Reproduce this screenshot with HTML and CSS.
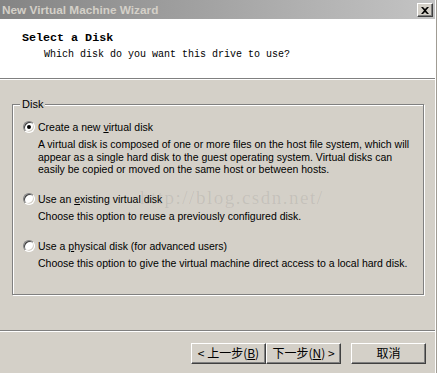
FILE: index.html
```html
<!doctype html>
<html>
<head>
    <meta charset="utf-8">
    <title>New Virtual Machine Wizard</title>
    <link rel="stylesheet" href="styles.css">
</head>
<body>
<div class="window">
    <div class="titlebar">
        <span class="title">New Virtual Machine Wizard</span>
        <a class="close">
            <svg width="8" height="7" viewBox="0 0 8 7"><path d="M0 0h2l2 2 2-2h2L5 3.5 8 7H6L4 5 2 7H0l3-3.5z" fill="#000"/></svg>
        </a>
    </div>

    <div class="header">
        <div class="header-title">Select a Disk</div>
        <div class="header-sub">Which disk do you want this drive to use?</div>
    </div>

    <div class="content">
        <fieldset class="group">
            <legend>Disk</legend>

            <div class="option">
                <div class="radio-row"><span class="radio checked"></span>Create a new <u>v</u>irtual disk</div>
                <div class="desc">
                    A virtual disk is composed of one or more files on the host file system, which will<br>
                    appear as a single hard disk to the guest operating system. Virtual disks can<br>
                    easily be copied or moved on the same host or between hosts.
                </div>
            </div>

            <div class="option">
                <div class="radio-row"><span class="radio"></span>Use an <u>e</u>xisting virtual disk</div>
                <div class="desc">Choose this option to reuse a previously configured disk.</div>
            </div>

            <div class="option">
                <div class="radio-row"><span class="radio"></span>Use a <u>p</u>hysical disk (for advanced users)</div>
                <div class="desc">Choose this option to give the virtual machine direct access to a local hard disk.</div>
            </div>
        </fieldset>
        <div class="watermark">http://blog.csdn.net/</div>
    </div>

    <div class="footer">
        <div class="btn-pair">
            <button class="btn">&lt; 上一步(<u>B</u>)</button>
            <button class="btn">下一步(<u>N</u>) &gt;</button>
        </div>
        <button class="btn">取消</button>
    </div>
</div>
</body>
</html>
```

FILE: styles.css
```css
body {
    margin: 0;
    background: #d4d0c8;
    font-family: "Liberation Sans", Arial, sans-serif;
    font-size: 10.5px;
    color: #000;
}

.window {
    position: relative;
    width: 435px;
    height: 373px;
    border-right: 1px solid #fff;
    box-shadow: 1px 0 0 #a09c94;
}

.titlebar {
    height: 19px;
    display: flex;
    align-items: center;
    justify-content: space-between;
    padding: 0 2px 0 2px;
    background: linear-gradient(to right, #848484, #c4c4c4);
}
.title {
    font-weight: bold;
    font-size: 11.8px;
    color: #d4d0c8;
}
.close {
    display: flex;
    align-items: center;
    justify-content: center;
    width: 14px;
    height: 12px;
    margin-top: 1px;
    background: #d4d0c8;
    border: 1px solid;
    border-color: #fff #404040 #404040 #fff;
    box-shadow: inset -1px -1px 0 #808080;
}

.header {
    height: 60px;
    box-sizing: border-box;
    padding: 12px 0 0 22px;
    background: #fff;
    border-bottom: 1px solid #808080;
    box-shadow: 0 1px 0 #fff;
    font-family: "Liberation Mono", monospace;
}
.header-title {
    font-weight: bold;
    font-size: 11.7px;
    line-height: 14px;
}
.header-sub {
    font-size: 10px;
    line-height: 12px;
    margin: 4px 0 0 22px;
}

.content {
    padding-top: 19px;
}

.group {
    margin: 0 0 0 12px;
    width: 412px;
    box-sizing: border-box;
    padding: 9px 0 24px 10px;
    border: 1px solid #808080;
    box-shadow: inset 1px 1px 0 #fff, 1px 1px 0 #fff;
}
.group legend {
    padding: 0 2px;
    margin-left: -3px;
    font-size: 11px;
    line-height: 13px;
    background: #d4d0c8;
}

.option + .option {
    margin-top: 16.5px;
}

.radio-row {
    line-height: 14px;
    white-space: nowrap;
}
.radio {
    display: inline-block;
    vertical-align: -2px;
    width: 10px;
    height: 10px;
    margin-right: 3px;
    border-radius: 50%;
    border: 1px solid;
    border-color: #808080 #fff #fff #808080;
    background: #fff;
    box-shadow: inset 1px 1px 0 #404040, inset -1px -1px 0 #d4d0c8;
    position: relative;
}
.radio.checked::after {
    content: "";
    position: absolute;
    left: 3px;
    top: 3px;
    width: 4px;
    height: 4px;
    border-radius: 50%;
    background: #000;
}

.desc {
    margin: 4px 0 0 15px;
    line-height: 12.6px;
    white-space: nowrap;
}

.watermark {
    position: absolute;
    left: 140px;
    top: 187px;
    font-family: "Liberation Serif", serif;
    font-size: 19px;
    letter-spacing: 1.5px;
    color: rgba(90, 90, 90, 0.13);
    pointer-events: none;
}

.footer {
    margin-top: 35px;
    border-top: 1px solid #808080;
    box-shadow: inset 0 1px 0 #fff;
    padding: 12px 9px 0 0;
    display: flex;
    justify-content: flex-end;
    gap: 10px;
}
.btn-pair {
    display: flex;
}
.btn {
    width: 75px;
    height: 21px;
    padding: 0;
    background: #d4d0c8;
    border: 1px solid;
    border-color: #fff #404040 #404040 #fff;
    box-shadow: inset -1px -1px 0 #808080;
    font-family: "Noto Sans CJK SC", sans-serif;
    font-size: 12px;
    line-height: 18px;
    color: #000;
}
```
